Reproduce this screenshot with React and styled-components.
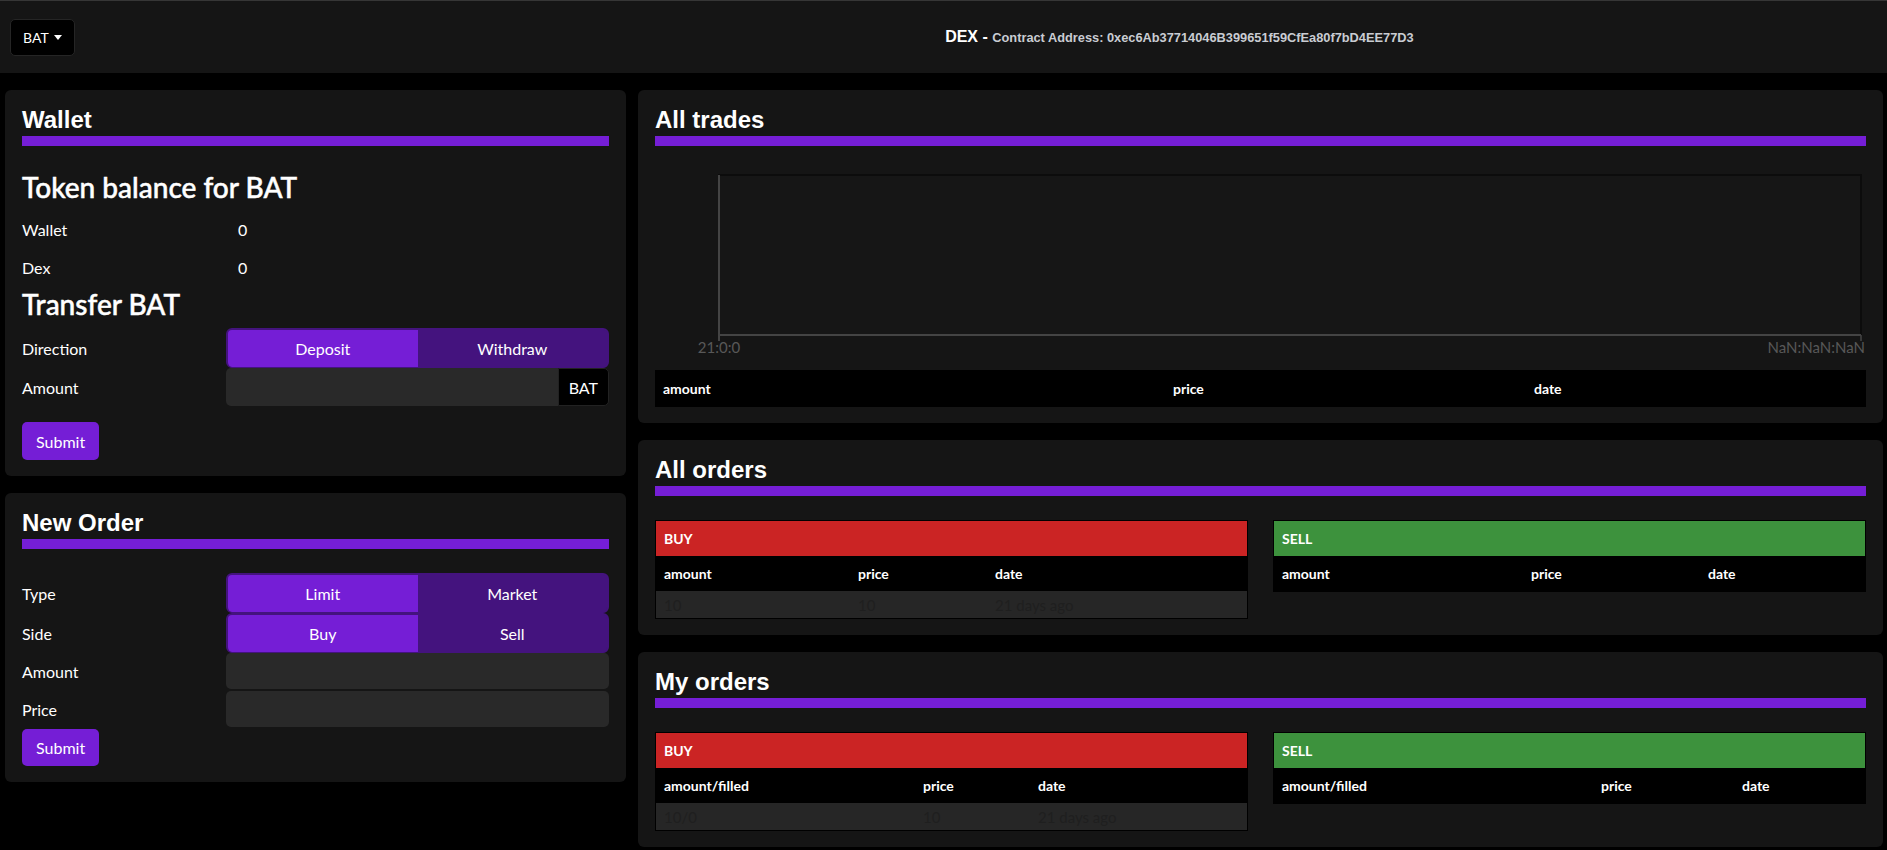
import React from 'react'
import styled, { createGlobalStyle } from 'styled-components'

const Global = createGlobalStyle`
body{
    margin: 0;
    background: #000;
    font-family: Lato, "Noto Sans", sans-serif;
    color: #fff;
}
`

const purple = '#751ed6'
const darkPurple = '#44137e'

const Header = styled.header`
display: grid;
grid-template-columns: 1fr 3fr;
align-items: center;
height: 73px;
box-sizing: border-box;
background: #151515;
border-top: 1px solid #363636;
`

const Dropdown = styled.button`
justify-self: start;
margin-left: 10px;
height: 37px;
padding: 0 12px;
display: inline-flex;
align-items: center;
gap: 5px;
background: #000;
color: #fff;
border: 1px solid #252525;
border-radius: 5px;
font-family: Lato, sans-serif;
font-size: 14px;

&::after{
    content: "";
    border-top: 5px solid #fff;
    border-left: 4px solid transparent;
    border-right: 4px solid transparent;
}
`

const Title = styled.h1`
margin: 0;
text-align: center;
font-family: "Liberation Sans", Arial, sans-serif;
font-weight: bold;
font-size: 16px;
color: #fff;
`

const Address = styled.span`
font-size: 12.8px;
color: #c9ccd2;
`

const Main = styled.main`
display: grid;
grid-template-columns: 621px 1fr;
column-gap: 12px;
align-items: start;
padding: 17px 4px 0 5px;
`

const Column = styled.div`
display: flex;
flex-direction: column;
gap: 17px;
`

const Card = styled.section`
background: #151515;
border-radius: 6px;
padding: 15px 17px 16px;
display: flex;
flex-direction: column;
`

const CardTitle = styled.h2`
margin: 0 0 2px;
font-family: "Liberation Sans", Arial, sans-serif;
font-weight: bold;
font-size: 24px;
line-height: 29px;
color: #fff;
`

const Bar = styled.div`
height: 10px;
background: ${purple};
margin-bottom: 24px;
`

const SubHeading = styled.h3`
margin: 0 0 7px;
font-size: 28px;
line-height: 34px;
font-weight: 500;
-webkit-text-stroke: 0.5px #fff;
`

const BalanceRow = styled.div`
display: grid;
grid-template-columns: 216px 1fr;
align-items: center;
height: 38px;
padding-bottom: 2px;
box-sizing: border-box;
font-size: 16px;
`

const FormRow = styled.div`
display: grid;
grid-template-columns: 204px 1fr;
align-items: center;
margin-bottom: ${({$mb}) => $mb || 0}px;
`

const Label = styled.label`
font-size: 16px;
`

const Toggle = styled.div`
display: flex;
height: 40px;
box-sizing: border-box;
background: ${darkPurple};
border: 2px solid ${darkPurple};
border-bottom-width: 1px;
border-radius: 6px;
overflow: hidden;
`

const ToggleButton = styled.button`
flex: 1;
border: 0;
background: ${({$active}) => $active ? purple : 'transparent'};
color: #fff;
font-family: Lato, sans-serif;
font-size: 16px;
`

const InputGroup = styled.div`
display: flex;
height: ${({$h}) => $h}px;
`

const Input = styled.input`
flex: 1;
min-width: 0;
background: #292929;
border: 0;
border-radius: ${({$addon}) => $addon ? '5px 0 0 5px' : '5px'};
color: #fff;
`

const Addon = styled.span`
display: flex;
align-items: center;
padding: 0 10px;
background: #000;
border: 1px solid #222;
border-radius: 0 5px 5px 0;
font-size: 16px;
`

const Submit = styled.button`
align-self: flex-start;
margin-top: ${({$mt}) => $mt}px;
height: ${({$h}) => $h || 38}px;
padding: 0 14px;
background: ${purple};
color: #fff;
border: 0;
border-radius: 5px;
font-family: Lato, sans-serif;
font-size: 16px;
`

const Chart = styled.svg`
display: block;
width: 100%;
height: 190px;
margin-bottom: 10px;
`

const Tables = styled.div`
display: grid;
grid-template-columns: 1fr 1fr;
column-gap: 25px;
align-items: start;
`

const Table = styled.div`
border: ${({$bordered}) => $bordered ? '1px solid #000' : '0'};
`

const Caption = styled.div`
height: 35px;
display: flex;
align-items: center;
padding: 0 8px;
background: ${({$tone}) => $tone};
font-weight: bold;
font-size: 14px;
`

const Row = styled.div`
display: grid;
grid-template-columns: ${({$cols}) => $cols};
align-items: center;
height: ${({$h}) => $h || 35}px;
background: ${({$data}) => $data ? '#262626' : '#000'};
color: ${({$data}) => $data ? '#1f1f1f' : '#fff'};
font-weight: ${({$data}) => $data ? 'normal' : 'bold'};
font-size: ${({$data}) => $data ? 15 : 14}px;
`

const Cell = styled.div`
padding: 0 8px;
`

const OrderTable = ({side, cols, heads, row}) => (
    <Table $bordered>
        <Caption $tone={side === 'BUY' ? '#cb2424' : '#3d923d'}>{side}</Caption>
        <Row $cols={cols}>
            {heads.map(h => <Cell key={h}>{h}</Cell>)}
        </Row>
        {row && (
            <Row $cols={cols} $data $h={27}>
                {row.map((c, i) => <Cell key={i}>{c}</Cell>)}
            </Row>
        )}
    </Table>
)

const App = () => {
    return (
        <>
            <Global />
            <Header>
                <Dropdown>BAT</Dropdown>
                <Title>
                    DEX - <Address>Contract Address: 0xec6Ab37714046B399651f59CfEa80f7bD4EE77D3</Address>
                </Title>
            </Header>
            <Main>
                <Column>
                    <Card>
                        <CardTitle>Wallet</CardTitle>
                        <Bar />
                        <SubHeading>Token balance for BAT</SubHeading>
                        <BalanceRow><span>Wallet</span><span>0</span></BalanceRow>
                        <BalanceRow><span>Dex</span><span>0</span></BalanceRow>
                        <SubHeading>Transfer BAT</SubHeading>
                        <FormRow>
                            <Label>Direction</Label>
                            <Toggle>
                                <ToggleButton $active>Deposit</ToggleButton>
                                <ToggleButton>Withdraw</ToggleButton>
                            </Toggle>
                        </FormRow>
                        <FormRow>
                            <Label>Amount</Label>
                            <InputGroup $h={38}>
                                <Input $addon />
                                <Addon>BAT</Addon>
                            </InputGroup>
                        </FormRow>
                        <Submit $mt={16}>Submit</Submit>
                    </Card>
                    <Card>
                        <CardTitle>New Order</CardTitle>
                        <Bar />
                        <FormRow>
                            <Label>Type</Label>
                            <Toggle>
                                <ToggleButton $active>Limit</ToggleButton>
                                <ToggleButton>Market</ToggleButton>
                            </Toggle>
                        </FormRow>
                        <FormRow>
                            <Label>Side</Label>
                            <Toggle>
                                <ToggleButton $active>Buy</ToggleButton>
                                <ToggleButton>Sell</ToggleButton>
                            </Toggle>
                        </FormRow>
                        <FormRow $mb={2}>
                            <Label>Amount</Label>
                            <InputGroup $h={36}><Input /></InputGroup>
                        </FormRow>
                        <FormRow>
                            <Label>Price</Label>
                            <InputGroup $h={36}><Input /></InputGroup>
                        </FormRow>
                        <Submit $mt={2} $h={37}>Submit</Submit>
                    </Card>
                </Column>

                <Column>
                    <Card>
                        <CardTitle>All trades</CardTitle>
                        <Bar />
                        <Chart viewBox="0 0 1211 190" preserveAspectRatio="none">
                            <rect x="64" y="5" width="1142" height="160" fill="#161616" stroke="#0c0c0c" strokeWidth="2" />
                            <line x1="64" y1="5" x2="64" y2="171" stroke="#444" strokeWidth="2" />
                            <line x1="64" y1="165" x2="1206" y2="165" stroke="#444" strokeWidth="2" />
                            <line x1="1206" y1="165" x2="1206" y2="171" stroke="#444" strokeWidth="1.5" />
                            <text x="64" y="183" textAnchor="middle" fill="#585858" fontSize="15" fontFamily="Lato, sans-serif">21:0:0</text>
                            <text x="1210" y="183" textAnchor="end" fill="#585858" fontSize="15" fontFamily="Lato, sans-serif">NaN:NaN:NaN</text>
                        </Chart>
                        <Row $cols="510px 361px 1fr" $h={37}>
                            <Cell>amount</Cell>
                            <Cell>price</Cell>
                            <Cell>date</Cell>
                        </Row>
                    </Card>

                    <Card>
                        <CardTitle>All orders</CardTitle>
                        <Bar />
                        <Tables>
                            <OrderTable side="BUY" cols="194px 137px 1fr" heads={['amount', 'price', 'date']} row={['10', '10', '21 days ago']} />
                            <OrderTable side="SELL" cols="249px 177px 1fr" heads={['amount', 'price', 'date']} />
                        </Tables>
                    </Card>

                    <Card>
                        <CardTitle>My orders</CardTitle>
                        <Bar />
                        <Tables>
                            <OrderTable side="BUY" cols="259px 115px 1fr" heads={['amount/filled', 'price', 'date']} row={['10/0', '10', '21 days ago']} />
                            <OrderTable side="SELL" cols="319px 141px 1fr" heads={['amount/filled', 'price', 'date']} />
                        </Tables>
                    </Card>
                </Column>
            </Main>
        </>
    )
}

export default App
